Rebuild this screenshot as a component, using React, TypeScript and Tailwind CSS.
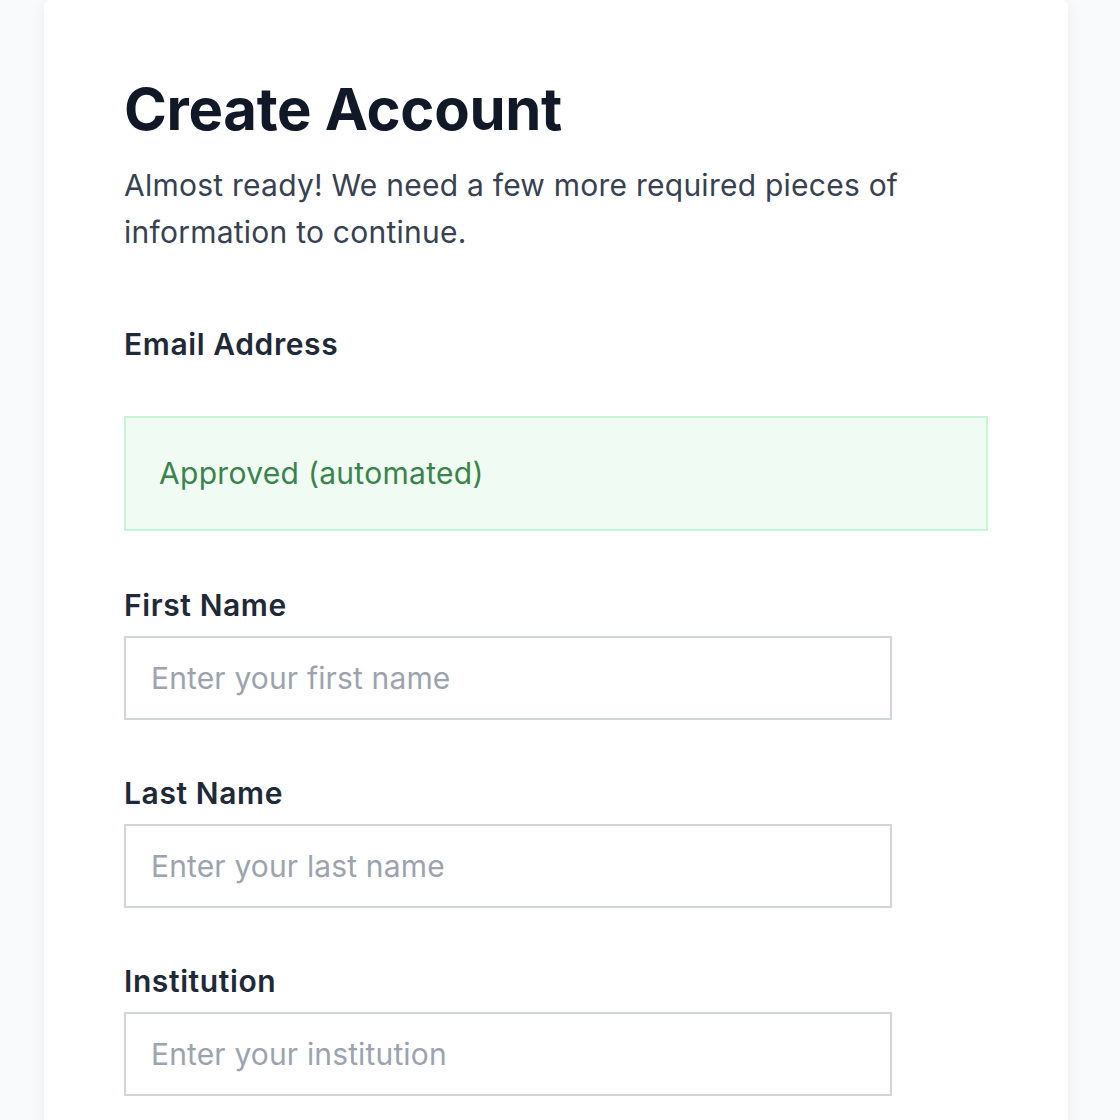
import React from 'react';

const fields = [
  { label: 'First Name', placeholder: 'Enter your first name' },
  { label: 'Last Name', placeholder: 'Enter your last name' },
  { label: 'Institution', placeholder: 'Enter your institution' },
];

export default function App() {
  return (
    <div className="h-[1120px] bg-[#f9fafb] font-['Inter',sans-serif] overflow-hidden">
      <div className="mx-[44px] w-[1024px] bg-white rounded-t-md shadow-[0_4px_16px_rgba(0,0,0,0.06)] px-[80px] pt-[73px] pb-[80px]">
        <h1 className="text-[58px] leading-[72px] font-bold tracking-[-0.005em] text-[#111827]">Create Account</h1>
        <p className="mt-[17px] text-[30px] leading-[47px] tracking-[0.008em] text-[#374151]">
          Almost ready! We need a few more required pieces of information to continue.
        </p>

        <div className="mt-[68px]">
          <label className="block text-[30px] leading-[40px] font-semibold tracking-[0.02em] text-[#1f2937]">Email Address</label>
          <div className="mt-[52px] box-border h-[115px] flex items-center border-2 border-[#c6f6d5] bg-[#f0fbf3] px-[33px] text-[30px] tracking-[0.01em] text-[#38844a]">
            Approved (automated)
          </div>
        </div>

        <div className="mt-[54px] flex flex-col gap-[53px]">
          {fields.map((f) => (
            <div key={f.label}>
              <label className="block text-[30px] leading-[40px] font-semibold tracking-[0.02em] text-[#1f2937]">{f.label}</label>
              <input
                type="text"
                placeholder={f.placeholder}
                className="mt-[11px] block box-border w-[768px] h-[84px] border-2 border-[#d1d5db] px-[25px] text-[30px] tracking-[0.005em] text-[#1f2937] placeholder:text-[#9ca3af] outline-none"
              />
            </div>
          ))}
        </div>
      </div>
    </div>
  );
}
